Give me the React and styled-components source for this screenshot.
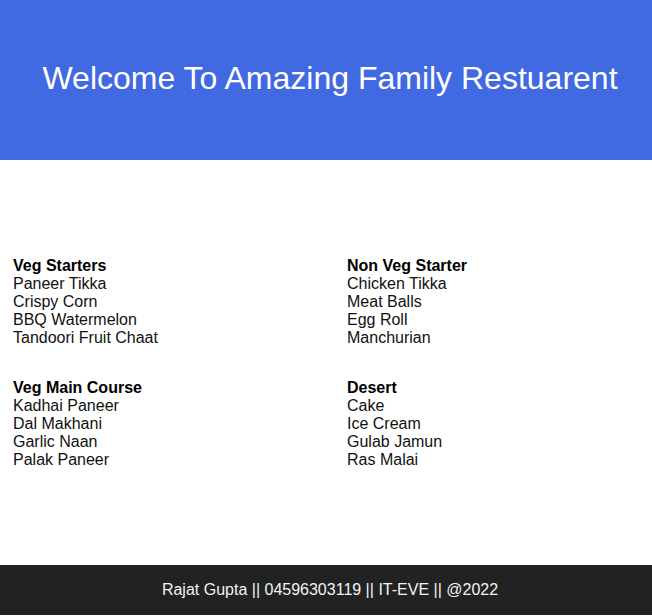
import React from 'react';
import styled, { createGlobalStyle } from 'styled-components';

const GlobalStyle = createGlobalStyle`
    body {
        margin: 0;
        font-family: "Liberation Sans", Arial, sans-serif;
        background: #fff;
    }
`

const menu = [
    { title: 'Veg Starters', items: ['Paneer Tikka', 'Crispy Corn', 'BBQ Watermelon', 'Tandoori Fruit Chaat'] },
    { title: 'Non Veg Starter', items: ['Chicken Tikka', 'Meat Balls', 'Egg Roll', 'Manchurian'] },
    { title: 'Veg Main Course', items: ['Kadhai Paneer', 'Dal Makhani', 'Garlic Naan', 'Palak Paneer'] },
    { title: 'Desert', items: ['Cake', 'Ice Cream', 'Gulab Jamun', 'Ras Malai'] },
];

const App = () => {
    return (
        <>
            <GlobalStyle />
            <Header>
                <Title>Welcome To Amazing Family Restuarent</Title>
            </Header>
            <Main>
                <MenuGrid>
                    {menu.map((section) => (
                        <Section key={section.title}>
                            <SectionTitle>{section.title}</SectionTitle>
                            {section.items.map((item) => (
                                <Item key={item}>{item}</Item>
                            ))}
                        </Section>
                    ))}
                </MenuGrid>
            </Main>
            <Footer>Rajat Gupta || 04596303119 || IT-EVE || @2022</Footer>
        </>
    );
};

export default App;

const Header = styled.header`
    height: 160px;
    background-color: #4169e1;
    display: flex;
    align-items: center;
    justify-content: center;
`

const Title = styled.h1`
    margin: 0 0 4px 8px;
    color: #fff;
    font-size: 32px;
    font-weight: normal;
`

const Main = styled.main`
    height: 405px;
    box-sizing: border-box;
    padding: 97px 0 0 13px;
`

const MenuGrid = styled.div`
    display: grid;
    grid-template-columns: 334px 334px;
    row-gap: 32px;
`

const Section = styled.div`
    display: flex;
    flex-direction: column;
    font-size: 16px;
    line-height: 18px;
    color: #111;
`

const SectionTitle = styled.div`
    font-weight: bold;
    color: #000;
`

const Item = styled.div``

const Footer = styled.footer`
    height: 50px;
    box-sizing: border-box;
    padding-left: 8px;
    background-color: #222;
    color: #f2f2f2;
    font-size: 16px;
    display: flex;
    align-items: center;
    justify-content: center;
`
